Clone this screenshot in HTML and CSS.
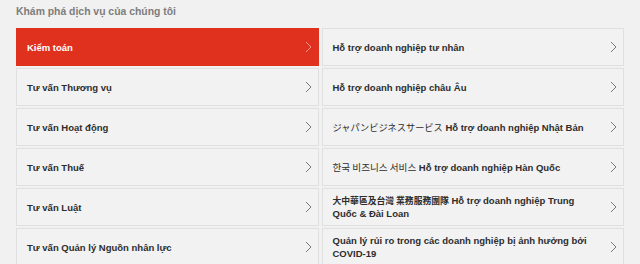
FILE: index.html
```html
<!DOCTYPE html>
<html lang="vi">
<head>
<meta charset="utf-8">
<title>Dịch vụ</title>
<link rel="stylesheet" href="styles.css">
</head>
<body>
<section class="services">
  <h2 class="services-title">Khám phá dịch vụ của chúng tôi</h2>
  <div class="services-grid">
    <a class="service active" href="#"><span class="service-label">Kiểm toán</span><svg class="chev" viewBox="0 0 7 12"><path d="M1 1l5 5-5 5"/></svg></a>
    <a class="service" href="#"><span class="service-label">Hỗ trợ doanh nghiệp tư nhân</span><svg class="chev" viewBox="0 0 7 12"><path d="M1 1l5 5-5 5"/></svg></a>
    <a class="service" href="#"><span class="service-label">Tư vấn Thương vụ</span><svg class="chev" viewBox="0 0 7 12"><path d="M1 1l5 5-5 5"/></svg></a>
    <a class="service" href="#"><span class="service-label">Hỗ trợ doanh nghiệp châu Âu</span><svg class="chev" viewBox="0 0 7 12"><path d="M1 1l5 5-5 5"/></svg></a>
    <a class="service" href="#"><span class="service-label">Tư vấn Hoạt động</span><svg class="chev" viewBox="0 0 7 12"><path d="M1 1l5 5-5 5"/></svg></a>
    <a class="service" href="#"><span class="service-label"><span class="cjk">ジャパンビジネスサービス</span> Hỗ trợ doanh nghiệp Nhật Bản</span><svg class="chev" viewBox="0 0 7 12"><path d="M1 1l5 5-5 5"/></svg></a>
    <a class="service" href="#"><span class="service-label">Tư vấn Thuế</span><svg class="chev" viewBox="0 0 7 12"><path d="M1 1l5 5-5 5"/></svg></a>
    <a class="service" href="#"><span class="service-label"><span class="kr">한국 비즈니스 서비스</span> Hỗ trợ doanh nghiệp Hàn Quốc</span><svg class="chev" viewBox="0 0 7 12"><path d="M1 1l5 5-5 5"/></svg></a>
    <a class="service" href="#"><span class="service-label">Tư vấn Luật</span><svg class="chev" viewBox="0 0 7 12"><path d="M1 1l5 5-5 5"/></svg></a>
    <a class="service" href="#"><span class="service-label"><span class="tc">大中華區及台灣 業務服務團隊</span> Hỗ trợ doanh nghiệp Trung Quốc &amp; Đài Loan</span><svg class="chev" viewBox="0 0 7 12"><path d="M1 1l5 5-5 5"/></svg></a>
    <a class="service" href="#"><span class="service-label">Tư vấn Quản lý Nguồn nhân lực</span><svg class="chev" viewBox="0 0 7 12"><path d="M1 1l5 5-5 5"/></svg></a>
    <a class="service" href="#"><span class="service-label">Quản lý rủi ro trong các doanh nghiệp bị ảnh hưởng bởi COVID-19</span><svg class="chev" viewBox="0 0 7 12"><path d="M1 1l5 5-5 5"/></svg></a>
  </div>
</section>
</body>
</html>
```
FILE: styles.css
```css
html, body {
  margin: 0;
  padding: 0;
  background: #f1f1f1;
}
body {
  font-family: "Liberation Sans", Arial, "Noto Sans CJK JP", sans-serif;
  color: #2d2d2d;
}
.services {
  padding: 4px 16px 0 16px;
}
.services-title {
  margin: 0;
  font-size: 10.4px;
  line-height: 15px;
  font-weight: bold;
  color: #7d7d7d;
  height: 24px;
}
.services-grid {
  display: grid;
  grid-template-columns: 1fr 1fr;
  column-gap: 3px;
  row-gap: 2px;
}
.service {
  display: flex;
  align-items: center;
  justify-content: space-between;
  box-sizing: border-box;
  height: 38px;
  padding: 0 6px 0 10px;
  border: 1px solid #e0e0e0;
  background: #f2f2f2;
  color: #2d2d2d;
  text-decoration: none;
  font-size: 9.5px;
  line-height: 13px;
  font-weight: bold;
}
.service-label {
  max-width: 256px;
}
.cjk { font-family: "Noto Sans CJK JP", sans-serif; font-weight: normal; font-size: 9.2px; }
.kr { font-family: "Noto Sans CJK KR", sans-serif; font-weight: normal; font-size: 9.6px; }
.tc { font-family: "Noto Sans CJK TC", sans-serif; font-weight: bold; font-size: 8.8px; }
.chev {
  width: 7px;
  height: 12px;
  flex: none;
  fill: none;
  stroke: #7a7a7a;
  stroke-width: 1;
}
.service.active {
  background: #e0301e;
  border-color: #e0301e;
  color: #ffffff;
}
.service.active .chev {
  stroke: #f29a90;
}
```
